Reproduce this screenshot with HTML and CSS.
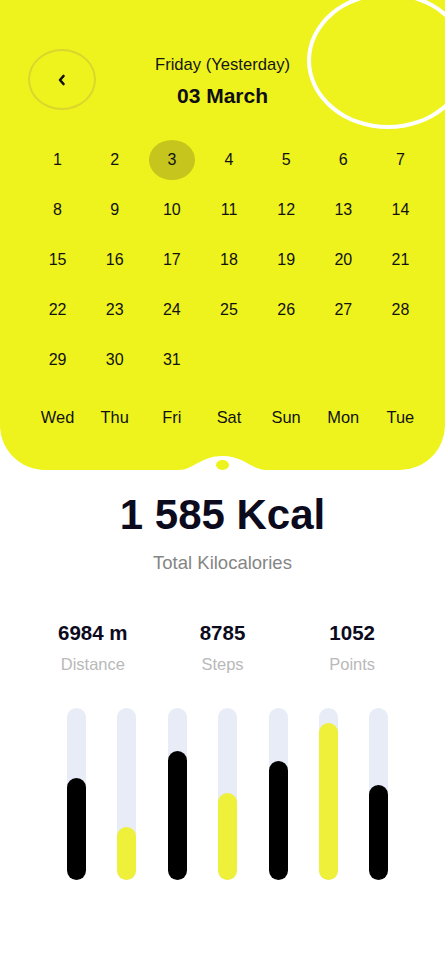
FILE: index.html
```html
<!DOCTYPE html>
<html>
<head>
<meta charset="utf-8">
<link rel="stylesheet" href="styles.css">
</head>
<body>
<div class="page">
  <section class="panel">
    <div class="ring"></div>
    <header class="header">
      <button class="back" aria-label="Back">
        <svg width="10" height="12" viewBox="0 0 10 12"><path d="M6.5 2 L3 6 L6.5 10" fill="none" stroke="#111" stroke-width="2.6" stroke-linecap="round" stroke-linejoin="round"/></svg>
      </button>
      <div class="title">
        <div class="day">Friday (Yesterday)</div>
        <div class="date">03 March</div>
      </div>
      <div></div>
    </header>
    <div class="grid">
      <span>1</span><span>2</span><span class="sel">3</span><span>4</span><span>5</span><span>6</span><span>7</span>
      <span>8</span><span>9</span><span>10</span><span>11</span><span>12</span><span>13</span><span>14</span>
      <span>15</span><span>16</span><span>17</span><span>18</span><span>19</span><span>20</span><span>21</span>
      <span>22</span><span>23</span><span>24</span><span>25</span><span>26</span><span>27</span><span>28</span>
      <span>29</span><span>30</span><span>31</span>
    </div>
    <div class="grid week">
      <span>Wed</span><span>Thu</span><span>Fri</span><span>Sat</span><span>Sun</span><span>Mon</span><span>Tue</span>
    </div>
    <svg class="notch" width="87" height="15" viewBox="0 0 87 15"><path d="M0 15 C14 15 22 1 43.5 1 C65 1 73 15 87 15 Z" fill="#fff"/><ellipse cx="43.5" cy="10" rx="6.5" ry="5" fill="#eef31e"/></svg>
  </section>

  <div class="total">1 585 Kcal</div>
  <div class="total-label">Total Kilocalories</div>

  <div class="stats">
    <div class="stat"><div class="val">6984 m</div><div class="lbl">Distance</div></div>
    <div class="stat"><div class="val">8785</div><div class="lbl">Steps</div></div>
    <div class="stat"><div class="val">1052</div><div class="lbl">Points</div></div>
  </div>

  <div class="bars">
    <div class="track"><div class="fill dark" style="height:102px"></div></div>
    <div class="track"><div class="fill yellow" style="height:53px"></div></div>
    <div class="track"><div class="fill dark" style="height:129px"></div></div>
    <div class="track"><div class="fill yellow" style="height:87px"></div></div>
    <div class="track"><div class="fill dark" style="height:119px"></div></div>
    <div class="track"><div class="fill yellow" style="height:157px"></div></div>
    <div class="track"><div class="fill dark" style="height:95px"></div></div>
  </div>
</div>
</body>
</html>
```
FILE: styles.css
```css
* { box-sizing: border-box; }
html, body { margin: 0; padding: 0; background: #fff; }
body { font-family: "Liberation Sans", Arial, sans-serif; color: #111; }
.page { width: 445px; height: 964px; overflow: hidden; }

.panel {
  position: relative;
  height: 470px;
  background: #eef31e;
  border-radius: 0 0 45px 45px;
  overflow: hidden;
  padding-top: 49px;
}
.ring {
  position: absolute;
  left: 307px;
  top: -8px;
  width: 162px;
  height: 137px;
  border: 4px solid #fff;
  border-radius: 50%;
}
.header {
  position: relative;
  display: grid;
  grid-template-columns: 68px 1fr 68px;
  align-items: center;
  padding: 0 28px;
  height: 61px;
}
.back {
  width: 68px;
  height: 61px;
  border: 2px solid #dbd62c;
  border-radius: 50%;
  background: transparent;
  display: flex;
  align-items: center;
  justify-content: center;
  padding: 0;
}
.title { text-align: center; margin-top: 4px; }
.day { font-size: 16.6px; line-height: 20px; color: #151515; }
.date { font-size: 21px; line-height: 24px; font-weight: 700; margin-top: 9px; color: #0e0e14; }

.grid {
  display: grid;
  grid-template-columns: repeat(7, 57.15px);
  grid-auto-rows: 50px;
  margin-left: 29px;
  width: 400px;
}
.header + .grid { margin-top: 25px; }
.grid span {
  display: flex;
  align-items: center;
  justify-content: center;
  font-size: 16px;
  color: #111;
  position: relative;
}
.grid .sel { isolation: isolate; }
.grid .sel::before {
  content: "";
  position: absolute;
  left: 50%;
  top: 50%;
  width: 46px;
  height: 40px;
  margin: -20px 0 0 -23px;
  border-radius: 50%;
  background: #c5c51d;
  z-index: -1;
}
.week { margin-top: 7px; }
.week span { font-size: 16.4px; }

.notch {
  position: absolute;
  left: 179px;
  bottom: 0;
}

.total {
  margin-top: 20px;
  text-align: center;
  font-size: 42px;
  line-height: 50px;
  font-weight: 700;
  color: #0b0b1d;
}
.total-label {
  margin-top: 12px;
  text-align: center;
  font-size: 18.5px;
  line-height: 22px;
  color: #858585;
}
.stats {
  display: grid;
  grid-template-columns: repeat(3, 1fr);
  padding: 0 28px;
  margin-top: 46px;
  text-align: center;
}
.val { font-size: 20.5px; line-height: 26px; font-weight: 700; color: #0b0b1d; }
.lbl { font-size: 16.5px; line-height: 20px; color: #b9b9b9; margin-top: 8px; }

.bars {
  display: flex;
  gap: 31.4px;
  margin: 34px 0 0 67px;
}
.track {
  width: 19px;
  height: 172px;
  background: #e8ecf6;
  border-radius: 10px;
  display: flex;
  align-items: flex-end;
}
.fill { width: 100%; border-radius: 10px; }
.fill.dark { background: #000; }
.fill.yellow { background: #eef03a; }
```
